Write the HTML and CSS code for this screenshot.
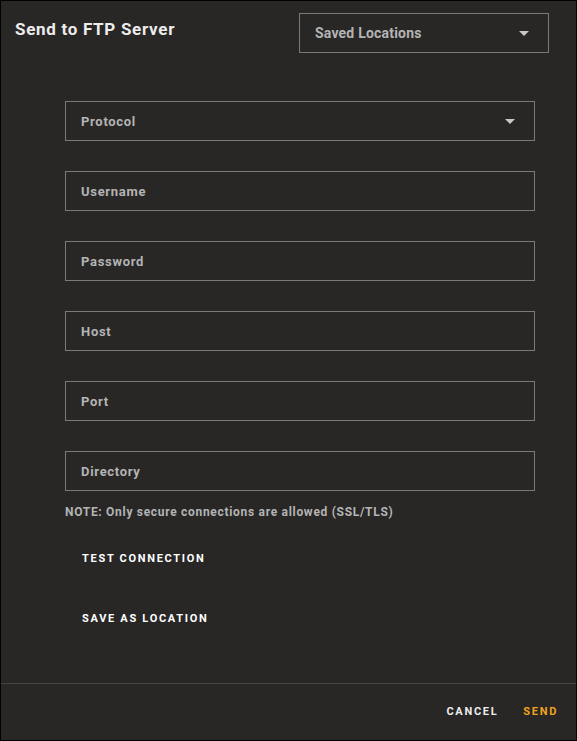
FILE: index.html
```html
<!DOCTYPE html>
<html>
<head>
<meta charset="utf-8">
<link rel="stylesheet" href="styles.css">
</head>
<body>
<div class="dialog">
  <div class="header">
    <div class="title">Send to FTP Server</div>
    <div class="select saved">
      <span>Saved Locations</span>
      <span class="caret"></span>
    </div>
  </div>
  <div class="form">
    <div class="select field">
      <span>Protocol</span>
      <span class="caret"></span>
    </div>
    <div class="field">Username</div>
    <div class="field">Password</div>
    <div class="field">Host</div>
    <div class="field">Port</div>
    <div class="field">Directory</div>
    <div class="note">NOTE: Only secure connections are allowed (SSL/TLS)</div>
    <div class="actions">
      <div class="btn">TEST CONNECTION</div>
      <div class="btn">SAVE AS LOCATION</div>
    </div>
  </div>
  <div class="footer">
    <div class="fbtn cancel">CANCEL</div>
    <div class="fbtn send">SEND</div>
  </div>
</div>
</body>
</html>
```
FILE: styles.css
```css
* { box-sizing: border-box; }
html, body { margin: 0; padding: 0; background: #000; }
body { font-family: Roboto, "Liberation Sans", sans-serif; }
.dialog {
  width: 577px;
  height: 741px;
  border: 1px solid #000;
  background: #282726;
  display: flex;
  flex-direction: column;
}
.header {
  display: flex;
  justify-content: space-between;
  align-items: flex-start;
  padding: 12px 27px 0 14px;
}
.title {
  margin-top: 6px;
  font-size: 17px;
  line-height: 20px;
  font-weight: 700;
  letter-spacing: 0.7px;
  color: #ececec;
}
.select {
  display: flex;
  align-items: center;
  justify-content: space-between;
}
.saved {
  width: 250px;
  height: 40px;
  border: 1px solid #7a7a7a;
  padding: 0 19px 0 15px;
  font-size: 14px;
  font-weight: 700;
  letter-spacing: 0.2px;
  color: #b4b4b4;
}
.caret {
  width: 0; height: 0;
  border-left: 5px solid transparent;
  border-right: 5px solid transparent;
  border-top: 5px solid #c8c8c8;
}
.form {
  margin: 48px 0 0 64px;
  width: 470px;
  display: flex;
  flex-direction: column;
}
.field {
  height: 40px;
  border: 1px solid #7a7a7a;
  padding: 0 19px 0 15px;
  display: flex;
  align-items: center;
  font-size: 13px;
  font-weight: 700;
  letter-spacing: 0.7px;
  color: #b4b4b4;
  margin-bottom: 30px;
}
.field.select { justify-content: space-between; }
.field:nth-child(6) { margin-bottom: 0; }
.note {
  margin-top: 13px;
  font-size: 12px;
  line-height: 16px;
  font-weight: 700;
  letter-spacing: 0.7px;
  color: #b4b4b4;
}
.actions {
  margin-top: 19px;
  display: flex;
  flex-direction: column;
  gap: 20px;
  align-items: flex-start;
}
.btn {
  padding: 12px 17px;
  font-size: 11px;
  line-height: 16px;
  font-weight: 700;
  letter-spacing: 1.7px;
  color: #ffffff;
}
.footer {
  margin-top: auto;
  height: 57px;
  border-top: 1px solid #454443;
  display: flex;
  justify-content: flex-end;
  align-items: center;
  gap: 25px;
  padding: 0 18px 2px 0;
}
.fbtn {
  font-size: 11px;
  font-weight: 700;
  letter-spacing: 1.7px;
}
.cancel { color: #ececec; }
.send { color: #f0a31c; }
```
